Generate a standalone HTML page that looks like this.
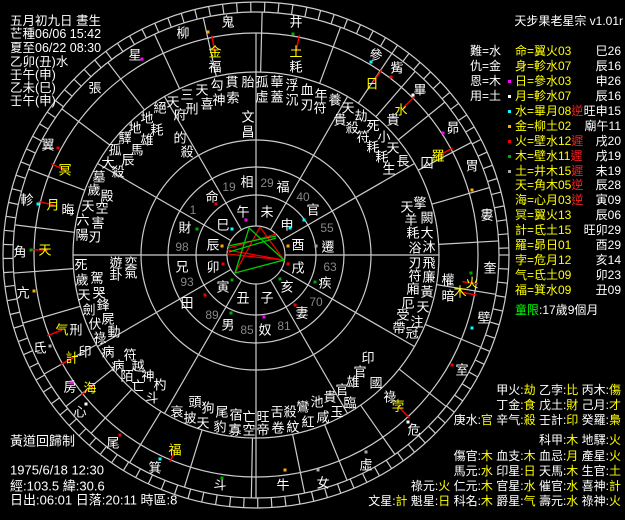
<!DOCTYPE html>
<html><head><meta charset="utf-8"><style>
html,body{margin:0;padding:0;background:#000;width:625px;height:520px;overflow:hidden}
svg{display:block}
text{font-family:"Liberation Sans","Noto Sans CJK TC",sans-serif;font-size:13px;fill:#fff;dominant-baseline:central;text-anchor:middle}
.l{text-anchor:start}.r{text-anchor:end}
.p{font-size:12px}
.tl{font-size:12.5px}
.y{fill:#ff0}.rd{fill:#f22}.g{fill:#0f0}.n{fill:#888;font-size:12px}
</style></head><body>
<svg id="s" width="625" height="520" viewBox="0 0 625 520">
<g id="lines" stroke="#ccc" stroke-width="1.2" fill="none">
<circle cx="256" cy="255" r="29"/><circle cx="256" cy="255" r="60"/><circle cx="256" cy="255" r="88"/><circle cx="256" cy="255" r="115"/>
<circle cx="256" cy="255" r="183"/><circle cx="256" cy="255" r="222"/><circle cx="256" cy="255" r="243"/><circle cx="256" cy="255" r="253"/>
</g>
<g id="tri" stroke-width="1.3" fill="none">
<path stroke="#e00" d="M260 227L284 260L227 250M260 227L235 273M227 254L284 260M229 248L276 234"/>
<path stroke="#0c0" d="M249 228L284 260L235 273Z M228 246L276 236M229 252L276 238"/>
</g>
<g id="txt">
<text class="l tl" x="10" y="21">五月初九日 晝生</text>
<text class="l tl" x="10" y="34">芒種06/06 15:42</text>
<text class="l tl" x="10" y="48">夏至06/22 08:30</text>
<text class="l tl" x="10" y="62">乙卯(丑)水</text>
<text class="l tl" x="10" y="75">壬午(申)</text>
<text class="l tl" x="10" y="88">乙未(巳)</text>
<text class="l tl" x="10" y="101">壬午(申)</text>
<text class="l" x="10" y="441">黃道回歸制</text>
<text class="l" x="10" y="470">1975/6/18 12:30</text>
<text class="l" x="10" y="486">經:103.5 緯:30.6</text>
<text class="l" x="10" y="500">日出:06:01 日落:20:11 時區:8</text>
<text class="r p" x="623" y="21">天步果老星宗 v1.01r</text>
<g class="p">
<text class="l p" x="470" y="51">難=水</text><text class="l p" x="470" y="66">仇=金</text><text class="l p" x="470" y="81">恩=木</text><text class="l p" x="470" y="96">用=土</text>
<text class="l y p" x="515" y="51">命=翼火03</text><text class="r p" x="621" y="51">巳26</text>
<text class="l y p" x="515" y="66">身=軫水07</text><text class="r p" x="621" y="66">辰16</text>
<text class="l y p" x="515" y="81">日=參水03</text><text class="r p" x="621" y="81">申26</text>
<text class="l y p" x="515" y="96">月=軫水07</text><text class="r p" x="621" y="96">辰16</text>
<text class="l y p" x="515" y="111">水=畢月08<tspan class="rd">逆</tspan></text><text class="r p" x="621" y="111">旺申15</text>
<text class="l y p" x="515" y="126">金=柳土02</text><text class="r p" x="621" y="126">廟午11</text>
<text class="l y p" x="515" y="141">火=壁水12<tspan class="rd">遲</tspan></text><text class="r p" x="621" y="141">戌20</text>
<text class="l y p" x="515" y="156">木=壁水11<tspan class="rd">遲</tspan></text><text class="r p" x="621" y="156">戌19</text>
<text class="l y p" x="515" y="171">土=井木15<tspan class="rd">遲</tspan></text><text class="r p" x="621" y="171">未19</text>
<text class="l y p" x="515" y="185">天=角木05<tspan class="rd">逆</tspan></text><text class="r p" x="621" y="185">辰28</text>
<text class="l y p" x="515" y="200">海=心月03<tspan class="rd">逆</tspan></text><text class="r p" x="621" y="200">寅09</text>
<text class="l y p" x="515" y="215">冥=翼火13</text><text class="r p" x="621" y="215">辰06</text>
<text class="l y p" x="515" y="230">計=氐土15</text><text class="r p" x="621" y="230">旺卯29</text>
<text class="l y p" x="515" y="245">羅=昴日01</text><text class="r p" x="621" y="245">酉29</text>
<text class="l y p" x="515" y="260">孛=危月12</text><text class="r p" x="621" y="260">亥14</text>
<text class="l y p" x="515" y="275">气=氐土09</text><text class="r p" x="621" y="275">卯23</text>
<text class="l y p" x="515" y="290">福=箕水09</text><text class="r p" x="621" y="290">丑09</text>
<text class="l p" x="515" y="310"><tspan class="g">童限</tspan>:17歲9個月</text>
</g>
<rect x="508" y="80" width="3" height="3" fill="#f0f"/><rect x="508" y="95" width="3" height="3" fill="#fff"/><rect x="508" y="110" width="3" height="3" fill="#0ff"/><rect x="508" y="125" width="3" height="3" fill="#fa0"/><rect x="508" y="140" width="3" height="3" fill="#e00"/><rect x="508" y="155" width="3" height="3" fill="#0a0"/><rect x="508" y="170" width="3" height="3" fill="#aaa"/>
<text class="r p" x="621" y="390">甲火:<tspan class="y">劫</tspan> 乙孛:<tspan class="y">比</tspan> 丙木:<tspan class="y">傷</tspan></text>
<text class="r p" x="621" y="405">丁金:<tspan class="y">食</tspan> 戊土:<tspan class="y">財</tspan> 己月:<tspan class="y">才</tspan></text>
<text class="r p" x="621" y="420">庚水:<tspan class="y">官</tspan> 辛气:<tspan class="y">殺</tspan> 壬計:<tspan class="y">印</tspan> 癸羅:<tspan class="y">梟</tspan></text>
<text class="r p" x="621" y="440">科甲:<tspan class="y">木</tspan> 地驛:<tspan class="y">火</tspan></text>
<text class="r p" x="621" y="456">傷官:<tspan class="y">木</tspan> 血支:<tspan class="y">木</tspan> 血忌:<tspan class="y">月</tspan> 產星:<tspan class="y">火</tspan></text>
<text class="r p" x="621" y="471">馬元:<tspan class="y">水</tspan> 印星:<tspan class="y">日</tspan> 天馬:<tspan class="y">木</tspan> 生官:<tspan class="y">土</tspan></text>
<text class="r p" x="621" y="486">祿元:<tspan class="y">火</tspan> 仁元:<tspan class="y">木</tspan> 官星:<tspan class="y">水</tspan> 催官:<tspan class="y">水</tspan> 喜神:<tspan class="y">計</tspan></text>
<text class="r p" x="621" y="501">文星:<tspan class="y">計</tspan> 魁星:<tspan class="y">日</tspan> 科名:<tspan class="y">木</tspan> 爵星:<tspan class="y">气</tspan> 壽元:<tspan class="y">水</tspan> 祿神:<tspan class="y">火</tspan></text>
</g>
</svg>
<script>
var s=document.getElementById('s'),NS='http://www.w3.org/2000/svg',cx=256,cy=255;
function el(t,a,p){var e=document.createElementNS(NS,t);for(var k in a)e.setAttribute(k,a[k]);(p||s).appendChild(e);return e}
function ln(a,r1,r2,c,w){var x=Math.cos(a),y=Math.sin(a);el('line',{x1:cx+x*r1,y1:cy+y*r1,x2:cx+x*r2,y2:cy+y*r2,stroke:c||'#ccc','stroke-width':w||1.2},document.getElementById('lines'))}
for(var i=0;i<12;i++){var a=i*Math.PI/6;ln(a,29,183)}
ln(-Math.PI/2,183,222);ln(Math.PI/2,183,243);
for(var d=0;d<360;d+=3.2){ln(d*Math.PI/180,243,253)}
function T(x,y,t,c){var e=el('text',{x:x,y:y},document.getElementById('txt'));if(c)e.setAttribute('class',c);e.textContent=t}
var M=[['鬼',228,22],['井',296,22],['參',376,55],['觜',397,68],['畢',420,90],['昴',453,128],['胃',472,166],['婁',487,215],['奎',490,268],['壁',484,318],['室',462,370],['危',414,430],['虛',366,465],['女',323,483],['牛',283,485],['斗',220,485],['箕',155,468],['尾',113,443],['心',80,412],['房',70,387],['氐',40,348],['亢',23,293],['角',20,252],['軫',27,200],['翼',48,145],['張',95,88],['星',135,55],['柳',183,33]];
var ang=M.map(function(m){return Math.atan2(m[2]-cy,m[1]-cx)});
for(var i=0;i<M.length;i++){T(M[i][1],M[i][2],M[i][0]);var a1=ang[i],a2=ang[(i+1)%M.length];var d=a2-a1;while(d>Math.PI)d-=2*Math.PI;while(d<-Math.PI)d+=2*Math.PI;ln(a1+d/2,183,243)}
var P=[['金',215,52,'福'],['土',296,52,'耗'],['日',372,84],['水',401,110],['羅',438,156],['火',472,283],['木',460,292],['孛',398,406],['福',175,450],['計',72,358],['气',62,330],['海',90,388],['天',45,250],['月',53,205],['冥',65,170]];
P.forEach(function(p){var a=Math.atan2(p[2]-cy,p[1]-cx);ln(a,208,224,'#e00',1.5);T(p[1],p[2],p[0],'y');if(p[3])T(p[1],p[2]+15,p[3])});
T(448,280,'權');T(448,296,'暗');T(76,330,'刑');T(68,210,'晦');
var S=[['胎',248,82],['貫',232,82],['勾',217,85],['天',202,90],['三',187,95],['索',233,98],['神',219,100],['喜',207,104],['刑',192,109],['孤',262,82],['華',277,82],['浮',292,85],['血',307,90],['年',321,95],['養',335,100],['虛',262,97],['蓋',277,97],['沉',292,100],['刃',307,105],['符',320,108],['文',248,117],['昌',248,132],
['天',173,102],['絕',160,108],['府',180,115],['地',147,118],['耗',157,130],['地',135,128],['雄',147,140],['的',180,138],['殺',187,152],['驛',125,138],['馬',137,150],['孤',115,150],['辰',128,160],['大',108,163],['殺',118,172],
['墓',99,177],['歲',94,190],['殿',107,196],['天',88,206],['空',102,208],['六',83,220],['害',98,223],['陽',82,235],['刃',95,237],['死',81,265],['遊',116,263],['奕',131,263],['歲',82,280],['駕',97,278],['卦',116,275],['氣',131,273],['天',84,295],['哭',99,293],['劍',89,310],['鋒',103,305],['伏',95,324],['屍',108,319],['祿',100,338],['動',114,332],['印',85,352],['病',108,352],['符',130,355],['病',118,366],['越',138,366],['陌',127,376],['神',148,376],['亡',138,386],['杓',160,385],['斗',152,398],
['衰',177,412],['頭',195,402],['披',190,418],['狗',208,408],['天',203,423],['尾',222,412],['豹',220,427],['宿',236,415],['寡',235,430],['亡',249,417],['空',249,430],['旺',263,417],['帝',263,430],['舌',277,412],['卷',278,428],['殺',290,412],['紋',293,427],['鸞',303,407],['紅',308,422],['池',317,402],['咸',323,417],['貴',330,397],['玉',337,412],['官',342,390],['臨',350,403],['雄',353,382],['印',368,358],['官',360,372],['國',376,383],['祿',390,397],
['天',348,108],['劫',361,116],['貴',340,120],['殺',352,128],['死',373,126],['符',363,137],['小',384,137],['耗',373,147],['天',393,148],['耗',382,157],['長',403,161],['生',389,169],['貴',393,120],['囚',427,163],
['擎',420,203],['天',407,207],['羊',411,220],['闕',427,218],['耗',413,233],['大',427,233],['浴',415,248],['沐',429,247],['刃',415,263],['飛',429,263],['符',415,276],['廉',429,277],['廂',413,289],['黃',427,292],['厄',408,303],['天',423,307],['受',403,315],['注',417,322],['帶',399,328],['冠',412,333]];
S.forEach(function(p){T(p[1],p[2],p[0])});
[['午',243,212],['未',267,212],['申',287,225],['酉',298,245],['戌',298,268],['亥',287,287],['子',267,298],['丑',243,298],['寅',223,287],['卯',213,267],['辰',213,245],['巳',223,225],
['相',247,182],['福',283,187],['官',313,210],['遷',328,247],['疾',325,283],['妻',302,313],['奴',265,330],['男',228,325],['田',187,303],['兄',182,267],['財',185,228],['命',212,197]].forEach(function(p){T(p[1],p[2],p[0])});
[['19',229,187],['29',267,183],['40',303,197],['55',327,228],['63',330,267],['70',316,302],['81',284,326],['85',247,330],['89',212,315],['93',187,282],['98',182,247],['1',193,210]].forEach(function(p){T(p[1],p[2],p[0],'n')});
[[216,204,'#e00'],[246,220,'#f0f'],[232,229,'#0ff'],[222,246,'#fa0'],[223,264,'#e00'],[232,280,'#0a0'],[290,228,'#0ff'],[288,246,'#fa0'],[288,264,'#e00'],[280,279,'#0a0'],[304,220,'#0ff'],[316,246,'#aaa'],[315,282,'#0a0'],[295,305,'#e00'],[264,317,'#f0f'],[231,313,'#0a0'],[205,295,'#e00'],[197,229,'#0a0'],[142,59,'#f0f'],[208,32,'#fa0'],[293,34,'#0a0'],[371,62,'#0ff'],[391,77,'#e00'],[413,95,'#fff'],[443,133,'#f0f'],[472,190,'#fa0'],[471,273,'#0a0'],[472,328,'#0ff'],[452,365,'#e00'],[408,422,'#fff'],[366,452,'#aaa'],[318,470,'#aaa'],[285,470,'#fa0'],[222,478,'#0a0'],[160,459,'#0ff'],[120,435,'#e00'],[86,404,'#fff'],[72,383,'#f0f'],[50,346,'#aaa'],[34,291,'#fa0'],[31,250,'#0a0'],[38,204,'#0ff'],[58,148,'#e00']].forEach(function(d){el('rect',{x:d[0]-1.5,y:d[1]-1.5,width:3,height:3,fill:d[2]})});
</script>
</body></html>
